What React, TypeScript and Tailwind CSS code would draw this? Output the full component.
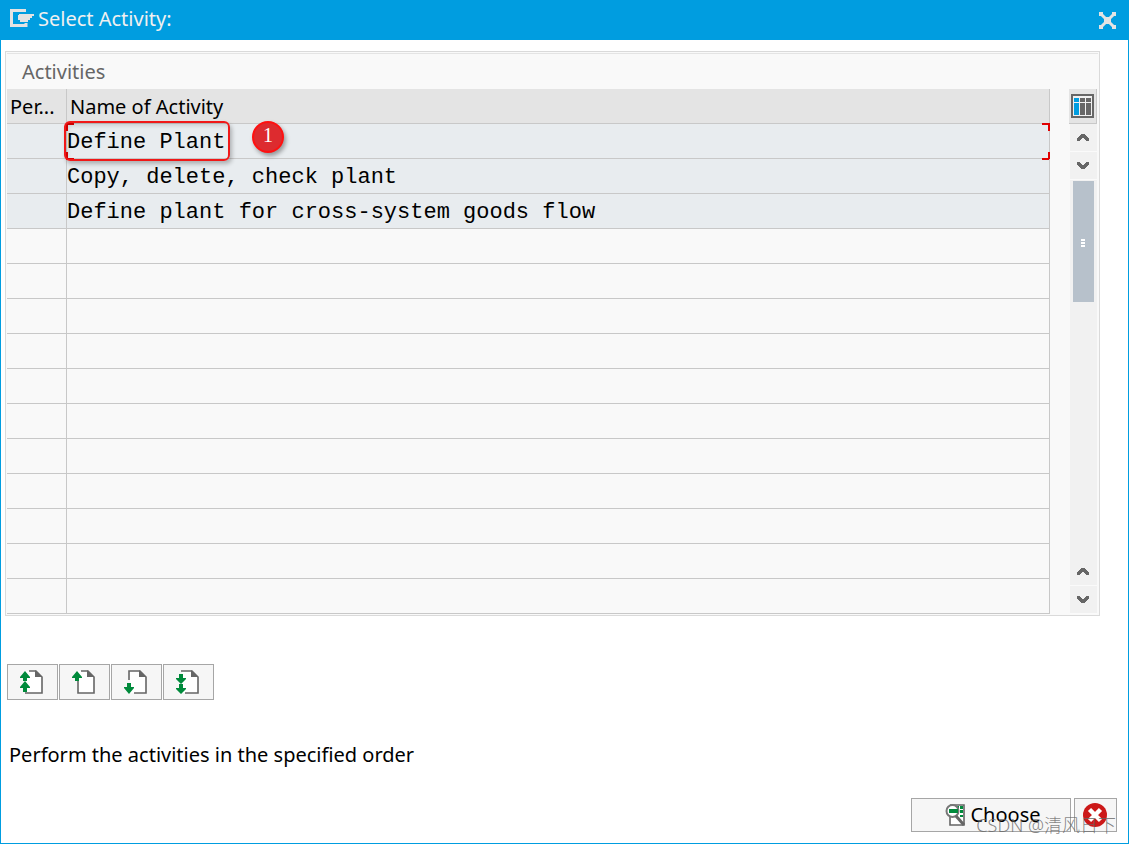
import React from 'react';

const ACTIVITIES = [
  'Define Plant',
  'Copy, delete, check plant',
  'Define plant for cross-system goods flow',
];
const ROW_COUNT = 14;

const ExitIcon = () => (
  <svg width="24" height="18" viewBox="0 0 24 18" aria-hidden="true">
    <path d="M16 1.5H1.5V16.5H16V14" fill="none" stroke="#e3e3e3" strokeWidth="3" />
    <path d="M9 5H24V7H22V9H20V11H18V13H10V11H8V6H9Z" fill="#e3e3e3" />
  </svg>
);

const CloseIcon = () => (
  <svg width="17" height="17" viewBox="0 0 17 17" aria-hidden="true">
    <path d="M2 2L15 15M15 2L2 15" stroke="#e3e3e3" strokeWidth="3" />
    <path d="M0 0h4v4H0zM13 0h4v4h-4zM0 13h4v4H0zM13 13h4v4h-4zM5 5h7v7H5z" fill="#e3e3e3" />
  </svg>
);

const ColumnsIcon = () => (
  <svg width="23" height="24" viewBox="0 0 23 24" shapeRendering="crispEdges" aria-hidden="true">
    <path d="M0 0H23V24H0Z" fill="#666" />
    <path d="M2 2H21V22H2Z" fill="#f0f0f0" />
    <path d="M3 4H8V8H3zM3 9H8V21H3z" fill="#009de0" />
    <path d="M9 4H14V8H9zM9 9H14V21H9zM15 4H20V8H15zM15 9H20V21H15z" fill="#666" />
  </svg>
);

const Chevron = ({ down = false }: { down?: boolean }) => (
  <svg
    width="12"
    height="7"
    viewBox="0 0 12 7"
    className={down ? 'rotate-180' : ''}
    aria-hidden="true"
  >
    <path
      d="M4 0h4v1h1v1h1v1h1v1h1v3H9V6H8V5H7V4H5V5H4V6H3V7H0V4h1V3h1V2h1V1h1Z"
      fill="#666"
    />
  </svg>
);

const PageFrame = ({ d, children }: { d: string; children: React.ReactNode }) => (
  <svg width="24" height="26" viewBox="0 0 24 26" aria-hidden="true">
    <path d="M8 2H17L22 8V24H6V2Z" fill="#fff" />
    <path d={d} fill="none" stroke="#666" strokeWidth="1.6" />
    <path d="M15 1V8H22Z" fill="#666" />
    <g fill="#008a3b">{children}</g>
  </svg>
);

const FirstPageIcon = () => (
  <PageFrame d="M9 2H16L22 8V24H5">
    <path d="M5 2L10 8V9H7V12H3V9H0V8Z" />
    <path d="M5 12L10 18V19H7V23H3V19H0V18Z" />
  </PageFrame>
);

const PreviousPageIcon = () => (
  <PageFrame d="M9 2H16L22 8V24H6V12">
    <path d="M5 2L10 8V9H7V12H3V9H0V8Z" />
  </PageFrame>
);

const NextPageIcon = () => (
  <PageFrame d="M5 11V2H16L22 8V24H10">
    <path d="M5 25L0 19V18H3V14H7V18H10V19Z" />
  </PageFrame>
);

const LastPageIcon = () => (
  <PageFrame d="M5 2H16L22 8V24H9">
    <path d="M5 15L0 10V9H3V5H7V9H10V10Z" />
    <path d="M5 25L0 20V19H3V15H7V19H10V20Z" />
  </PageFrame>
);

const ChooseIcon = () => (
  <svg width="21" height="24" viewBox="0 0 21 24" aria-hidden="true">
    <path d="M5 14V22H19V2H5" fill="#fff" stroke="#666" strokeWidth="1.6" />
    <path d="M12 3H14V6H12zM15 3H18V6H15zM15 7H18V10H15zM15 12H18V14H15z" fill="#008a3b" />
    <circle cx="7.5" cy="8" r="6" fill="#fff" stroke="#777" strokeWidth="2" />
    <path d="M4 6H13V10H4Z" fill="#008a3b" />
    <path d="M11 13L19 22" stroke="#666" strokeWidth="3" />
  </svg>
);

const CancelIcon = () => (
  <svg width="24" height="24" viewBox="0 0 24 24" aria-hidden="true">
    <circle cx="12" cy="12" r="12" fill="#cc1919" />
    <path d="M6.5 6.5L17.5 17.5M17.5 6.5L6.5 17.5" stroke="#fff" strokeWidth="4.5" />
  </svg>
);

const PAGE_BUTTONS = [
  { label: 'First page', Icon: FirstPageIcon },
  { label: 'Previous page', Icon: PreviousPageIcon },
  { label: 'Next page', Icon: NextPageIcon },
  { label: 'Last page', Icon: LastPageIcon },
];

const ScrollButton = ({ label, down }: { label: string; down?: boolean }) => (
  <button
    type="button"
    aria-label={label}
    className="flex h-7 w-full shrink-0 items-center justify-center border-b border-[#fafafa] bg-[#f1f1f1] pr-px"
  >
    <Chevron down={down} />
  </button>
);

// Red corner marks of the focused cell, with the numbered callout on top
const CellFocus = () => (
  <>
    <span className="absolute -top-px -right-px h-2 w-2 border-t-2 border-r-2 border-[#e00000]" />
    <span className="absolute -right-px -bottom-0.5 h-2 w-2 border-r-2 border-b-2 border-[#e00000]" />
    <span className="absolute -top-px -left-px h-2 w-2 border-t-2 border-l-2 border-[#e00000]" />
    <span className="absolute -bottom-0.5 -left-px h-2 w-2 border-b-2 border-l-2 border-[#e00000]" />
    <span className="absolute -top-[3px] -left-[3px] h-10 w-[166px] rounded-md border-2 border-[#f01818] shadow-[2px_3px_4px_rgba(0,0,0,0.25),inset_2px_3px_4px_rgba(0,0,0,0.12)]" />
    <span className="absolute -top-[3px] left-[185px] flex h-8 w-8 items-center justify-center rounded-full border-2 border-[#ff1010] bg-[#dd2b2f] pb-1 font-['Liberation_Serif',serif] text-xl leading-none text-white shadow-[2px_3px_4px_rgba(0,0,0,0.35)]">
      1
    </span>
  </>
);

const ActivityTable = () => (
  <table className="min-w-0 flex-1 table-fixed border-separate border-spacing-0">
    <colgroup>
      <col className="w-[60px]" />
      <col />
    </colgroup>
    <thead>
      <tr className="h-[35px] bg-[#e4e4e4] text-left">
        <th className="border-r border-b border-[#c8c8c8] p-0 pt-0.5 pl-[3px] font-normal">Per...</th>
        <th className="border-r border-b border-[#c8c8c8] p-0 pt-0.5 pl-[3px] font-normal">
          Name of Activity
        </th>
      </tr>
    </thead>
    <tbody>
      {Array.from({ length: ROW_COUNT }, (_, i) => (
        <tr key={i} className={i < ACTIVITIES.length ? 'h-[35px] bg-[#e8ecef]' : 'h-[35px]'}>
          <td className="border-r border-b border-[#c8c8c8] p-0" />
          <td className="relative border-r border-b border-[#c8c8c8] p-0 pt-1 font-['Liberation_Mono',monospace] text-[22px] leading-7 whitespace-nowrap">
            {ACTIVITIES[i]}
            {i === 0 && <CellFocus />}
          </td>
        </tr>
      ))}
    </tbody>
  </table>
);

const ScrollRail = () => (
  <div className="flex w-7 shrink-0 flex-col">
    <button
      type="button"
      aria-label="Configure columns"
      className="flex h-[35px] items-center justify-center border-r border-b border-[#c8c8c8] bg-[#e4e4e4]"
    >
      <ColumnsIcon />
    </button>
    <div className="ml-px flex flex-1 flex-col bg-[#f1f1f1]">
      <ScrollButton label="Scroll up" />
      <ScrollButton label="Scroll down" down />
      <div className="flex-1 px-[3px] pt-px">
        <div className="flex h-[121px] flex-col items-center justify-center gap-px bg-[#b7c1cb] pt-0.5 pr-px">
          <span className="h-0.5 w-1 bg-white" />
          <span className="h-0.5 w-1 bg-white" />
          <span className="h-0.5 w-1 bg-white" />
        </div>
      </div>
      <ScrollButton label="Page up" />
      <ScrollButton label="Page down" down />
    </div>
  </div>
);

export default function App() {
  return (
    <div className="flex min-h-screen flex-col border-x border-b border-[#009de0] bg-white font-['Noto_Sans','Noto_Sans_CJK_SC',sans-serif] text-xl leading-7 text-black">
      <header className="flex h-10 items-center bg-[#009de0] pr-3 pl-[9px]">
        <span className="pb-1">
          <ExitIcon />
        </span>
        <h1 className="ml-1 pb-0.5 text-[#f0f0f0]">Select Activity:</h1>
        <button type="button" aria-label="Close" className="ml-auto">
          <CloseIcon />
        </button>
      </header>

      <main className="flex flex-1 flex-col">
        <section className="mt-[11px] mr-7 ml-1 border border-[#dadada] bg-[#f9f9f9] px-px pb-px">
          <h2 className="mt-px border-t border-[#e4e4e4] pt-1 pb-[3px] pl-[15px] text-[#666]">Activities</h2>
          <div className="flex justify-between gap-[19px] pr-px">
            <ActivityTable />
            <ScrollRail />
          </div>
        </section>

        <div className="mt-12 ml-1.5 flex gap-px">
          {PAGE_BUTTONS.map(({ label, Icon }) => (
            <button
              key={label}
              type="button"
              aria-label={label}
              className="flex h-9 w-[51px] items-center justify-center border border-[#a6a6a6] bg-[#f6f6f6] pr-px"
            >
              <Icon />
            </button>
          ))}
        </div>

        <p className="mt-[41px] ml-2">Perform the activities in the specified order</p>

        <footer className="relative mt-auto flex justify-end gap-[3px] pr-[11px] pb-[11px]">
          <button
            type="button"
            className="flex h-[34px] w-40 items-center justify-center gap-1 border border-[#a6a6a6] bg-[#f6f6f6] pl-1"
          >
            <ChooseIcon />
            Choose
          </button>
          <button
            type="button"
            aria-label="Cancel"
            className="flex h-[34px] w-[43px] items-center justify-center border border-[#a6a6a6] bg-[#f6f6f6] pr-0.5"
          >
            <CancelIcon />
          </button>
          <span className="pointer-events-none absolute right-3 bottom-1 text-lg leading-7 font-light whitespace-nowrap text-[#666]/80">
            CSDN @清风日下
          </span>
        </footer>
      </main>
    </div>
  );
}
